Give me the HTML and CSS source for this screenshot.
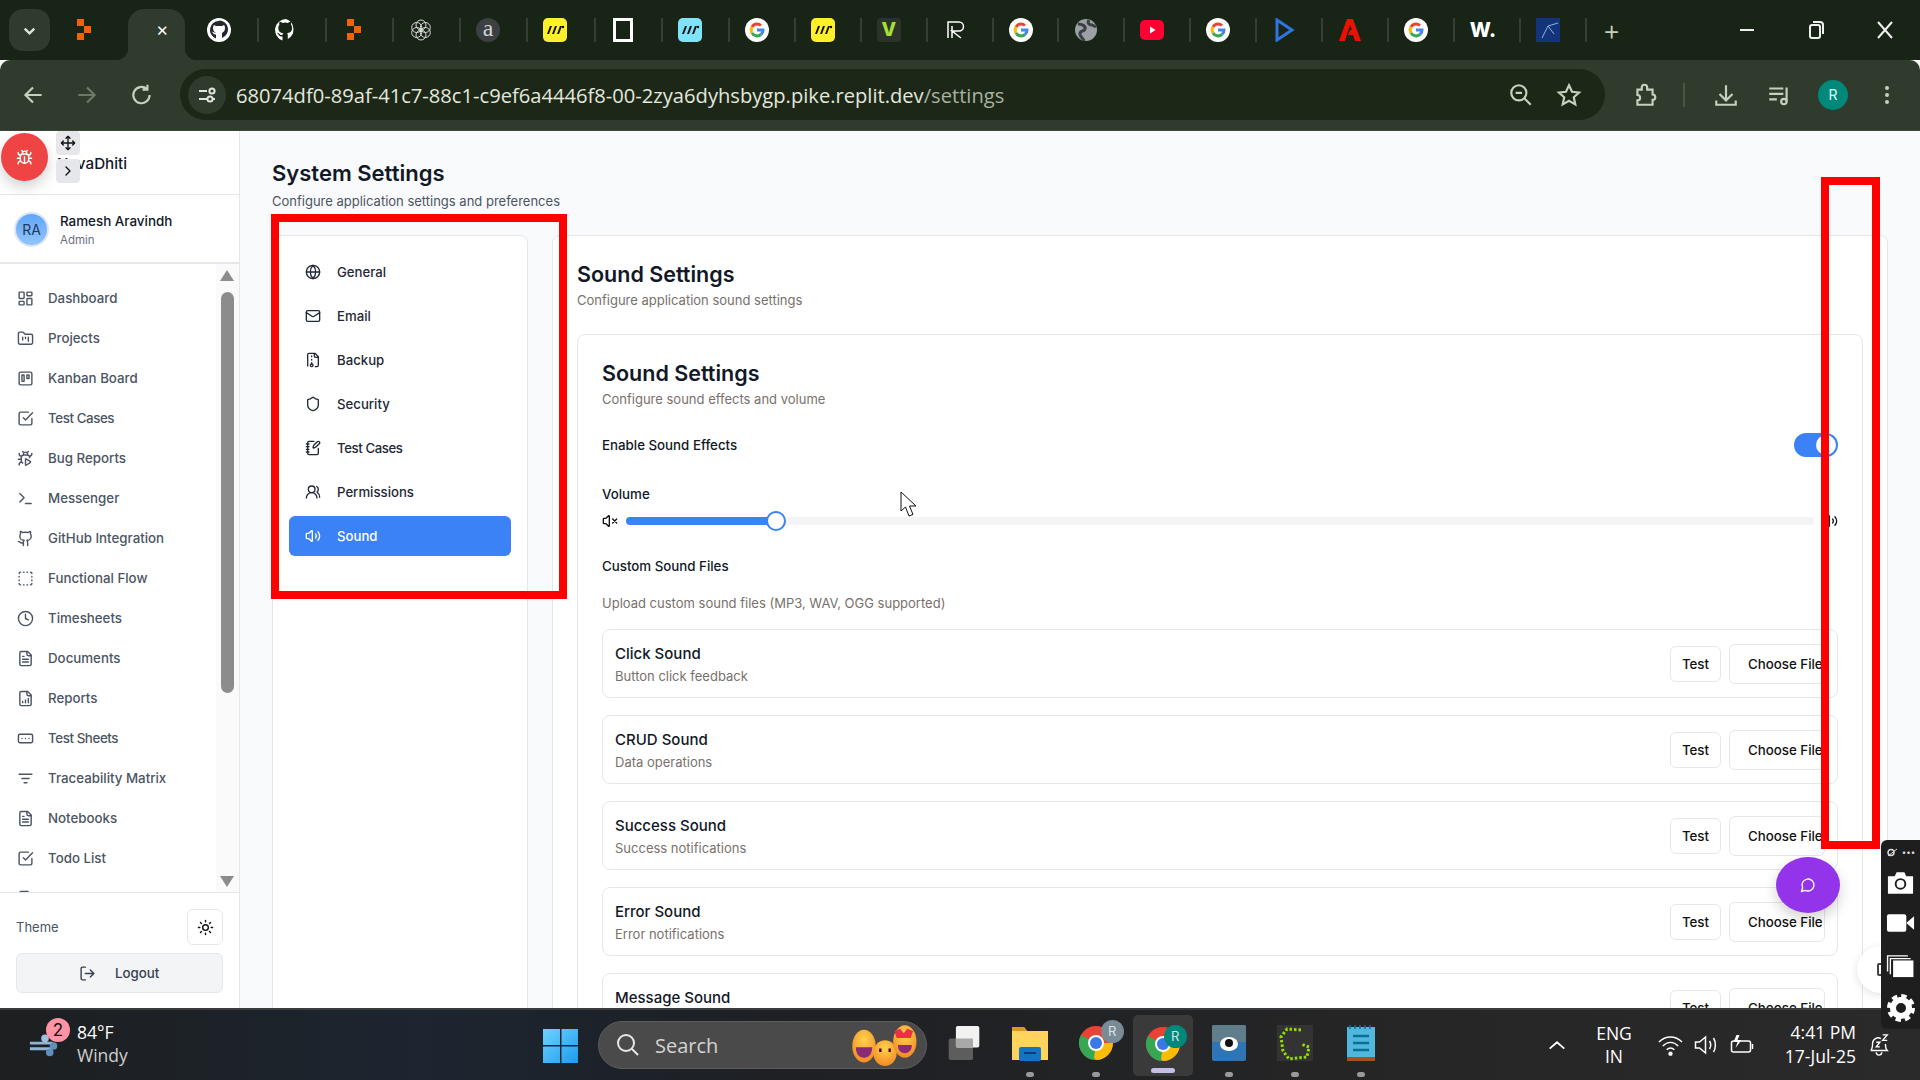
FILE: index.html
```html
<!DOCTYPE html>
<html lang="en">
<head>
    <meta charset="UTF-8">
    <title>System Settings</title>
    <link rel="stylesheet" href="styles.css">
</head>
<body>
    <!-- icon sprite -->
    <svg class="sprite" xmlns="http://www.w3.org/2000/svg">
        <symbol id="i-dashboard" viewBox="0 0 24 24"><rect x="3" y="3" width="7" height="9" rx="1"/><rect x="14" y="3" width="7" height="5" rx="1"/><rect x="14" y="12" width="7" height="9" rx="1"/><rect x="3" y="16" width="7" height="5" rx="1"/></symbol>
        <symbol id="i-projects" viewBox="0 0 24 24"><path d="M4 20h16a2 2 0 0 0 2-2V8a2 2 0 0 0-2-2h-7.93a2 2 0 0 1-1.66-.9l-.82-1.2A2 2 0 0 0 7.93 3H4a2 2 0 0 0-2 2v13c0 1.1.9 2 2 2Z"/><path d="M8 10v4M12 10v2M16 10v6"/></symbol>
        <symbol id="i-kanban" viewBox="0 0 24 24"><rect x="3" y="3" width="18" height="18" rx="2"/><rect x="7" y="7" width="3" height="9"/><rect x="14" y="7" width="3" height="5"/></symbol>
        <symbol id="i-check" viewBox="0 0 24 24"><path d="m9 11 3 3L22 4"/><path d="M21 12v7a2 2 0 0 1-2 2H5a2 2 0 0 1-2-2V5a2 2 0 0 1 2-2h11"/></symbol>
        <symbol id="i-bugplay" viewBox="0 0 24 24"><path d="M12.765 21.522a.5.5 0 0 1-.765-.424v-8.196a.5.5 0 0 1 .765-.424l5.878 3.674a1 1 0 0 1 0 1.696z"/><path d="M14.12 3.88 16 2M18 11a4 4 0 0 0-4-4h-4a4 4 0 0 0-4 4v3a6.1 6.1 0 0 0 2 4.5M20.97 5c0 2.1-1.6 3.8-3.5 4M3 21c0-2.1 1.7-3.9 3.8-4M6 13H2M6.53 9C4.6 8.8 3 7.1 3 5M8 2l1.88 1.88M9 7.13v-1a3 3 0 0 1 4.18-2.895 3 3 0 0 1 1.82 2.895v1"/></symbol>
        <symbol id="i-terminal" viewBox="0 0 24 24"><path d="M4 17l6-6-6-6M12 19h8"/></symbol>
        <symbol id="i-github" viewBox="0 0 24 24"><path d="M15 22v-4a4.8 4.8 0 0 0-1-3.5c3 0 6-2 6-5.5.08-1.25-.27-2.48-1-3.5.28-1.15.28-2.35 0-3.5 0 0-1 0-3 1.5-2.64-.5-5.36-.5-8 0C6 2 5 2 5 2c-.3 1.15-.3 2.35 0 3.5A5.403 5.403 0 0 0 4 9c0 3.5 3 5.5 6 5.5-.39.49-.68 1.05-.85 1.65-.17.6-.22 1.23-.15 1.85v4"/><path d="M9 18c-4.51 2-5-2-7-2"/></symbol>
        <symbol id="i-dashed" viewBox="0 0 24 24"><path d="M5 3a2 2 0 0 0-2 2M19 3a2 2 0 0 1 2 2M21 19a2 2 0 0 1-2 2M5 21a2 2 0 0 1-2-2M9 3h1M9 21h1M14 3h1M14 21h1M3 9v1M21 9v1M3 14v1M21 14v1"/></symbol>
        <symbol id="i-clock" viewBox="0 0 24 24"><circle cx="12" cy="12" r="10"/><path d="M12 6v6l4 2"/></symbol>
        <symbol id="i-file" viewBox="0 0 24 24"><path d="M15 2H6a2 2 0 0 0-2 2v16a2 2 0 0 0 2 2h12a2 2 0 0 0 2-2V7Z"/><path d="M14 2v4a2 2 0 0 0 2 2h4M10 9H8M16 13H8M16 17H8"/></symbol>
        <symbol id="i-report" viewBox="0 0 24 24"><path d="M15 2H6a2 2 0 0 0-2 2v16a2 2 0 0 0 2 2h12a2 2 0 0 0 2-2V7Z"/><path d="M14 2v4a2 2 0 0 0 2 2h4M8 18v-2M12 18v-4M16 18v-6"/></symbol>
        <symbol id="i-sheet" viewBox="0 0 24 24"><rect x="2" y="6" width="20" height="12" rx="2"/><path d="M12 12h.01M17 12h.01M7 12h.01"/></symbol>
        <symbol id="i-filter" viewBox="0 0 24 24"><path d="M3 6h18M7 12h10M10 18h4"/></symbol>
        <symbol id="i-globe" viewBox="0 0 24 24"><circle cx="12" cy="12" r="10"/><path d="M12 2a14.5 14.5 0 0 0 0 20 14.5 14.5 0 0 0 0-20M2 12h20"/></symbol>
        <symbol id="i-mail" viewBox="0 0 24 24"><rect x="2" y="4" width="20" height="16" rx="2"/><path d="m22 7-8.97 5.7a1.94 1.94 0 0 1-2.06 0L2 7"/></symbol>
        <symbol id="i-backup" viewBox="0 0 24 24"><path d="M10 12v-1M10 18v-2M10 7V6M14 2v4a2 2 0 0 0 2 2h4M15.5 22H18a2 2 0 0 0 2-2V7l-5-5H6a2 2 0 0 0-2 2v16a2 2 0 0 0 .274 1.01"/><circle cx="10" cy="20" r="2"/></symbol>
        <symbol id="i-shield" viewBox="0 0 24 24"><path d="M20 13c0 5-3.5 7.5-7.66 8.95a1 1 0 0 1-.67-.01C7.5 20.5 4 18 4 13V6a1 1 0 0 1 1-1c2 0 4.5-1.2 6.24-2.72a1.17 1.17 0 0 1 1.52 0C14.51 3.81 17 5 19 5a1 1 0 0 1 1 1z"/></symbol>
        <symbol id="i-notebook" viewBox="0 0 24 24"><path d="M13.4 2H6a2 2 0 0 0-2 2v16a2 2 0 0 0 2 2h12a2 2 0 0 0 2-2v-7.4M2 6h4M2 10h4M2 14h4M2 18h4"/><path d="M21.378 5.626a1 1 0 1 0-3.004-3.004l-5.01 5.012a2 2 0 0 0-.506.854l-.837 2.87a.5.5 0 0 0 .62.62l2.87-.837a2 2 0 0 0 .854-.506z"/></symbol>
        <symbol id="i-users" viewBox="0 0 24 24"><path d="M18 21a8 8 0 0 0-16 0"/><circle cx="10" cy="8" r="5"/><path d="M22 20c0-3.37-2-6.5-4-8a5 5 0 0 0-.45-8.3"/></symbol>
        <symbol id="i-volume" viewBox="0 0 24 24"><path d="M11 4.702a.705.705 0 0 0-1.203-.498L6.413 7.587A1.4 1.4 0 0 1 5.416 8H3a1 1 0 0 0-1 1v6a1 1 0 0 0 1 1h2.416a1.4 1.4 0 0 1 .997.413l3.383 3.384A.705.705 0 0 0 11 19.298z"/><path d="M16 9a5 5 0 0 1 0 6M19.364 18.364a9 9 0 0 0 0-12.728"/></symbol>
        <symbol id="i-mute" viewBox="0 0 24 24"><path d="M11 4.702a.705.705 0 0 0-1.203-.498L6.413 7.587A1.4 1.4 0 0 1 5.416 8H3a1 1 0 0 0-1 1v6a1 1 0 0 0 1 1h2.416a1.4 1.4 0 0 1 .997.413l3.383 3.384A.705.705 0 0 0 11 19.298z"/><path d="M22 9l-6 6M16 9l6 6"/></symbol>
        <symbol id="i-sun" viewBox="0 0 24 24"><circle cx="12" cy="12" r="4"/><path d="M12 2v2M12 20v2M4.93 4.93l1.41 1.41M17.66 17.66l1.41 1.41M2 12h2M20 12h2M6.34 17.66l-1.41 1.41M19.07 4.93l-1.41 1.41"/></symbol>
        <symbol id="i-logout" viewBox="0 0 24 24"><path d="M9 21H5a2 2 0 0 1-2-2V5a2 2 0 0 1 2-2h4M16 17l5-5-5-5M21 12H9"/></symbol>
        <symbol id="i-message" viewBox="0 0 24 24"><path d="M7.9 20A9 9 0 1 0 4 16.1L2 22Z"/></symbol>
        <symbol id="i-bug" viewBox="0 0 24 24"><path d="M8 2l1.88 1.88M14.12 3.88 16 2M9 7.13v-1a3.003 3.003 0 1 1 6 0v1M12 20c-3.3 0-6-2.7-6-6v-3a4 4 0 0 1 4-4h4a4 4 0 0 1 4 4v3c0 3.3-2.7 6-6 6M12 20v-9M6.53 9C4.6 8.8 3 7.1 3 5M6 13H2M3 21c0-2.1 1.7-3.9 3.8-4M20.97 5c0 2.1-1.6 3.8-3.5 4M22 13h-4M17.2 17c2.1.1 3.8 1.9 3.8 4"/></symbol>
        <symbol id="i-move" viewBox="0 0 24 24"><path d="M12 2v20M15 19l-3 3-3-3M19 9l3 3-3 3M2 12h20M5 9l-3 3 3 3M9 5l3-3 3 3"/></symbol>
        <symbol id="i-chevron" viewBox="0 0 24 24"><path d="m9 18 6-6-6-6"/></symbol>

        <symbol id="f-replit" viewBox="0 0 24 24"><path fill="#f26207" d="M5 1h7v7H5zM12 8h7v7h-7zM5 15h7v7H5z"/></symbol>
        <symbol id="f-google" viewBox="0 0 24 24"><circle cx="12" cy="12" r="12" fill="#fff"/><path d="M12 6a6 6 0 0 1 4 1.5" fill="none" stroke="#ea4335" stroke-width="3"/><path d="M7 9a6 6 0 0 1 5-3" fill="none" stroke="#ea4335" stroke-width="3"/><path d="M7 15a6 6 0 0 1 0-6" fill="none" stroke="#fbbc05" stroke-width="3"/><path d="M16 16.5A6 6 0 0 1 7 15" fill="none" stroke="#34a853" stroke-width="3"/><path d="M12 12h6a6 6 0 0 1-2 4.5" fill="none" stroke="#4285f4" stroke-width="3"/></symbol>
        <symbol id="f-stripes" viewBox="0 0 24 24"><rect x="0" y="0" width="24" height="24" rx="5" fill="currentColor"/><path d="M4 16l3-8h2l-3 8zM9 16l3-8h2l-3 8zM14 16l3-8h2l-3 8z" fill="#111"/><circle cx="20" cy="9" r="1.2" fill="#111"/></symbol>
        <symbol id="s-chrome" viewBox="0 0 36 36"><circle cx="18" cy="18" r="17" fill="#ea4335"/><path d="M18 18 3 26a17 17 0 0 0 15 9z" fill="#34a853"/><path d="M3 10 18 18 3 26a17 17 0 0 1 0-16z" fill="#34a853"/><path d="M18 18h17a17 17 0 0 1-17 17l-2-2z" fill="#fbbc05"/><circle cx="18" cy="18" r="8" fill="#fff"/><circle cx="18" cy="18" r="6" fill="#3b78e7"/></symbol>
        <linearGradient id="win-grad" x1="0" y1="0" x2="1" y2="1"><stop offset="0" stop-color="#6fd3fb"/><stop offset="1" stop-color="#1a9bf0"/></linearGradient>
        <radialGradient id="emoji-grad" cx=".5" cy=".3" r=".8"><stop offset="0" stop-color="#ffd24d"/><stop offset="1" stop-color="#f2801f"/></radialGradient>
    </svg>

    <!-- browser chrome -->
    <header class="tabstrip">
        <button class="tab-list"><svg viewBox="0 0 24 24" class="chev-down"><path d="m7 10 5 5 5-5"/></svg></button>
        <div class="tab-first"><svg class="fav"><use href="#f-replit"/></svg></div>
        <div class="tab-active"><span class="tab-close">✕</span></div>
        <div class="tabs">
            <div class="tab"><svg class="fav" viewBox="0 0 24 24"><circle cx="12" cy="12" r="12" fill="#fff"/><path d="M12 3a9 9 0 0 0-3 17.5v-4c-2 .3-3-1-4-3 2 .4 3 1.700 4 1.500-2-1-3-3-3-5s1-3 1-3l2 1h6l2-1s1 1 1 3-1 4-3 5v5a9 9 0 0 0-3-17.500z" fill="#23282c"/></svg></div>
            <div class="tab"><svg class="fav" viewBox="0 0 24 24"><path d="M12 1a11 11 0 0 0-3.500 21.400v-4c-3 .6-3.700-1.400-3.700-1.400-.5-1.300-1.200-1.600-1.200-1.600-1-.7.100-.7.100-.7 1.100.1 1.700 1.100 1.700 1.100 1 1.700 2.600 1.200 3.200.9.100-.7.400-1.200.7-1.500-2.400-.3-5-1.200-5-5.400 0-1.200.4-2.200 1.100-3-.1-.3-.5-1.400.1-2.900 0 0 .9-.3 3 1.100a10 10 0 0 1 5.400 0c2.100-1.400 3-1.100 3-1.100.6 1.500.2 2.600.1 2.900.7.800 1.100 1.800 1.100 3 0 4.200-2.600 5.100-5 5.400.4.300.7 1 .7 2v3.800A11 11 0 0 0 12 1z" fill="#fff"/></svg></div>
            <div class="tab"><svg class="fav"><use href="#f-replit"/></svg></div>
            <div class="tab"><svg class="fav icon-line openai" viewBox="0 0 24 24"><circle cx="12" cy="7" r="5"/><circle cx="12" cy="17" r="5"/><circle cx="7.700" cy="9.500" r="5"/><circle cx="16.300" cy="9.500" r="5"/><circle cx="7.700" cy="14.500" r="5"/><circle cx="16.300" cy="14.500" r="5"/></svg></div>
            <div class="tab"><span class="fav-round">a</span></div>
            <div class="tab stripe-yellow"><svg class="fav"><use href="#f-stripes"/></svg></div>
            <div class="tab"><span class="fav-square"></span></div>
            <div class="tab stripe-cyan"><svg class="fav"><use href="#f-stripes"/></svg></div>
            <div class="tab"><svg class="fav"><use href="#f-google"/></svg></div>
            <div class="tab stripe-yellow"><svg class="fav"><use href="#f-stripes"/></svg></div>
            <div class="tab"><span class="fav-v">V</span></div>
            <div class="tab"><svg class="fav icon-line" viewBox="0 0 24 24"><path d="M5 20V4h11a4 4 0 0 1 0 9H9l9 7M9 8v12"/></svg></div>
            <div class="tab"><svg class="fav"><use href="#f-google"/></svg></div>
            <div class="tab"><svg class="fav" viewBox="0 0 24 24"><circle cx="12" cy="12" r="11" fill="#9aa0a6"/><path d="M4 6c4 0 8 2 7 5s-4 1-5 4 3 5 4 8M15 2c-2 3 0 5 3 5l4 2" fill="none" stroke="#3c4043" stroke-width="3"/></svg></div>
            <div class="tab"><svg class="fav" viewBox="0 0 24 24"><rect x="0" y="2" width="24" height="20" rx="5" fill="#ff0033"/><path d="M10 8.500 15.500 12 10 15.500z" fill="#fff"/></svg></div>
            <div class="tab"><svg class="fav"><use href="#f-google"/></svg></div>
            <div class="tab"><svg class="fav" viewBox="0 0 24 24"><path d="M5 2l15 10L5 22z" fill="none" stroke="#2f74e0" stroke-width="3"/></svg></div>
            <div class="tab"><svg class="fav" viewBox="0 0 24 24"><path d="M9 1h6l8 22h-6l-2-6h-5l2-5h2L12 7 7 23H1z" fill="#eb1000"/></svg></div>
            <div class="tab"><svg class="fav"><use href="#f-google"/></svg></div>
            <div class="tab"><span class="fav-w">W.</span></div>
            <div class="tab"><svg class="fav" viewBox="0 0 24 24"><rect width="24" height="24" fill="#12347a"/><path d="M6 20 12 8l10-3M12 8l6 8" fill="none" stroke="#8fb4d8" stroke-width="1"/></svg></div>
            <div class="tab tab-new">+</div>
        </div>
        <div class="window-btns">
            <svg viewBox="0 0 24 24" class="win-btn"><path d="M5 12h14"/></svg>
            <svg viewBox="0 0 24 24" class="win-btn"><rect x="6" y="7" width="10" height="13" rx="2"/><path d="M9 4h7a3 3 0 0 1 3 3v9"/></svg>
            <svg viewBox="0 0 24 24" class="win-btn"><path d="M5 4l14 16M19 4 5 20"/></svg>
        </div>
    </header>

    <div class="toolbar">
        <svg viewBox="0 0 24 24" class="tb-icon tb-back"><path d="M20 12H5M12 5l-7 7 7 7"/></svg>
        <svg viewBox="0 0 24 24" class="tb-icon tb-forward"><path d="M4 12h15M12 5l7 7-7 7"/></svg>
        <svg viewBox="0 0 24 24" class="tb-icon tb-reload"><path d="M19 12a7.500 7.500 0 1 1-2.500-5.500M17 2.500V7h-4.500"/></svg>
        <div class="omnibox">
            <span class="site-info"><svg viewBox="0 0 24 24" class="tb-icon-sm"><path d="M4 8h8M18 16h2M4 16h8"/><circle cx="17" cy="8" r="2.600"/><circle cx="15" cy="16" r="2.600"/></svg></span>
            <span class="url">68074df0-89af-41c7-88c1-c9ef6a4446f8-00-2zya6dyhsbygp.pike.replit.dev<span class="url-path">/settings</span></span>
            <svg viewBox="0 0 24 24" class="tb-icon tb-zoom"><circle cx="10" cy="10" r="7"/><path d="M7 10h6M15 15l6 6"/></svg>
            <svg viewBox="0 0 24 24" class="tb-icon tb-star"><path d="M12 3l2.800 6 6.500.7-4.900 4.400 1.400 6.500L12 17.300 6.200 20.600l1.400-6.500L2.700 9.700 9.200 9z"/></svg>
        </div>
        <svg viewBox="0 0 24 24" class="tb-icon tb-ext"><path d="M5 7h4V5a2.500 2.500 0 0 1 5 0v2h5v4.500a2.500 2.500 0 0 1 0 5V21H5v-4a2.500 2.500 0 0 0 0-5z"/></svg>
        <span class="tb-sep"></span>
        <svg viewBox="0 0 24 24" class="tb-icon tb-download"><path d="M12 3v13M6 11l6 6 6-6M3 17v4h18v-4"/></svg>
        <svg viewBox="0 0 24 24" class="tb-icon tb-media"><path d="M3 6h13M3 11h13M3 16h7M19 5v13"/><circle cx="16.500" cy="18" r="2.500"/></svg>
        <span class="tb-avatar">R</span>
        <svg viewBox="0 0 24 24" class="tb-kebab"><circle cx="12" cy="5" r="2"/><circle cx="12" cy="12" r="2"/><circle cx="12" cy="19" r="2"/></svg>
    </div>

    <!-- the app -->
    <div class="app">
        <aside class="sidebar">
            <div class="brand">NavaDhiti</div>
            <div class="user">
                <span class="user-avatar">RA</span>
                <div>
                    <div class="user-name">Ramesh Aravindh</div>
                    <div class="user-role">Admin</div>
                </div>
            </div>
            <nav class="side-nav">
                <a class="side-link"><svg class="ico"><use href="#i-dashboard"/></svg>Dashboard</a>
                <a class="side-link"><svg class="ico"><use href="#i-projects"/></svg>Projects</a>
                <a class="side-link"><svg class="ico"><use href="#i-kanban"/></svg>Kanban Board</a>
                <a class="side-link tight"><svg class="ico"><use href="#i-check"/></svg>Test Cases</a>
                <a class="side-link"><svg class="ico"><use href="#i-bugplay"/></svg>Bug Reports</a>
                <a class="side-link"><svg class="ico"><use href="#i-terminal"/></svg>Messenger</a>
                <a class="side-link"><svg class="ico"><use href="#i-github"/></svg>GitHub Integration</a>
                <a class="side-link"><svg class="ico"><use href="#i-dashed"/></svg>Functional Flow</a>
                <a class="side-link"><svg class="ico"><use href="#i-clock"/></svg>Timesheets</a>
                <a class="side-link"><svg class="ico"><use href="#i-file"/></svg>Documents</a>
                <a class="side-link"><svg class="ico"><use href="#i-report"/></svg>Reports</a>
                <a class="side-link tight"><svg class="ico"><use href="#i-sheet"/></svg>Test Sheets</a>
                <a class="side-link"><svg class="ico"><use href="#i-filter"/></svg>Traceability Matrix</a>
                <a class="side-link"><svg class="ico"><use href="#i-file"/></svg>Notebooks</a>
                <a class="side-link"><svg class="ico"><use href="#i-check"/></svg>Todo List</a>
                <a class="side-link"><svg class="ico"><use href="#i-file"/></svg></a>
                <div class="scrollbar">
                    <span class="arrow-up"></span>
                    <span class="scroll-thumb"></span>
                    <span class="arrow-down"></span>
                </div>
            </nav>
            <div class="side-foot">
                <div class="theme-row">
                    <span>Theme</span>
                    <button class="theme-btn"><svg class="ico ico-dark"><use href="#i-sun"/></svg></button>
                </div>
                <button class="logout"><svg class="ico"><use href="#i-logout"/></svg>Logout</button>
            </div>
        </aside>

        <main class="main">
            <h1 class="page-title">System Settings</h1>
            <p class="page-sub">Configure application settings and preferences</p>
            <div class="settings">
                <div class="settings-nav">
                    <a class="set-link"><svg class="ico"><use href="#i-globe"/></svg>General</a>
                    <a class="set-link"><svg class="ico"><use href="#i-mail"/></svg>Email</a>
                    <a class="set-link"><svg class="ico"><use href="#i-backup"/></svg>Backup</a>
                    <a class="set-link"><svg class="ico"><use href="#i-shield"/></svg>Security</a>
                    <a class="set-link tight"><svg class="ico"><use href="#i-notebook"/></svg>Test Cases</a>
                    <a class="set-link"><svg class="ico"><use href="#i-users"/></svg>Permissions</a>
                    <a class="set-link active"><svg class="ico"><use href="#i-volume"/></svg>Sound</a>
                </div>
                <section class="panel">
                    <h2 class="panel-title">Sound Settings</h2>
                    <p class="panel-sub">Configure application sound settings</p>
                    <div class="card">
                        <h3 class="card-title">Sound Settings</h3>
                        <p class="card-sub">Configure sound effects and volume</p>
                        <div class="enable-row">
                            <span class="label">Enable Sound Effects</span>
                            <span class="toggle"><span class="toggle-thumb"></span></span>
                        </div>
                        <div class="label volume-label">Volume</div>
                        <div class="slider">
                            <svg class="ico ico-dark"><use href="#i-mute"/></svg>
                            <div class="track">
                                <div class="track-fill" style="width: 12.6%"></div>
                                <span class="track-thumb"></span>
                            </div>
                            <svg class="ico ico-dark"><use href="#i-volume"/></svg>
                        </div>
                        <div class="label files-label">Custom Sound Files</div>
                        <p class="files-hint">Upload custom sound files (MP3, WAV, OGG supported)</p>
                        <div class="sound-row">
                            <div><div class="sound-name">Click Sound</div><div class="sound-desc">Button click feedback</div></div>
                            <button class="btn-test">Test</button><button class="btn-file">Choose File</button>
                        </div>
                        <div class="sound-row">
                            <div><div class="sound-name">CRUD Sound</div><div class="sound-desc">Data operations</div></div>
                            <button class="btn-test">Test</button><button class="btn-file">Choose File</button>
                        </div>
                        <div class="sound-row">
                            <div><div class="sound-name">Success Sound</div><div class="sound-desc">Success notifications</div></div>
                            <button class="btn-test">Test</button><button class="btn-file">Choose File</button>
                        </div>
                        <div class="sound-row">
                            <div><div class="sound-name">Error Sound</div><div class="sound-desc">Error notifications</div></div>
                            <button class="btn-test">Test</button><button class="btn-file">Choose File</button>
                        </div>
                        <div class="sound-row">
                            <div><div class="sound-name">Message Sound</div><div class="sound-desc"></div></div>
                            <button class="btn-test">Test</button><button class="btn-file">Choose File</button>
                        </div>
                    </div>
                </section>
            </div>
        </main>

        <!-- things floating over the page -->
        <div class="debug-fab"><svg class="ico"><use href="#i-bug"/></svg></div>
        <div class="mini-btn mini-move"><svg class="ico"><use href="#i-move"/></svg></div>
        <div class="mini-btn mini-next"><svg class="ico"><use href="#i-chevron"/></svg></div>
        <div class="mark mark-nav"></div>
        <div class="mark mark-side"></div>
        <svg class="cursor" viewBox="0 0 18 27"><path d="M1 1v19l4.500-4 3.500 9 4-1.500-3.500-8.500H16z" fill="#fff" stroke="#111" stroke-width="1"/></svg>
        <div class="chat-fab"><svg class="ico"><use href="#i-message"/></svg></div>
        <div class="peek-circle"><span class="peek-icon"></span></div>
    </div>

    <div class="capture-bar">
        <svg viewBox="0 0 24 24" class="cap-top"><circle cx="8" cy="13" r="6" fill="none" stroke="#ddd" stroke-width="3"/><path d="M2 20 20 6" stroke="#ddd" stroke-width="2"/></svg><span class="cap-dots">•••</span>
        <svg viewBox="0 0 30 24" class="cap-icon cap-camera"><path d="M2 5h7l2-4h8l2 4h7v18H2z" fill="#fff"/><circle cx="15" cy="13" r="5" fill="none" stroke="#1e1e1e" stroke-width="2"/></svg>
        <svg viewBox="0 0 30 24" class="cap-icon"><rect x="1" y="3" width="20" height="18" rx="2" fill="#fff"/><path d="M21 12l8-7v14z" fill="#fff"/></svg>
        <svg viewBox="0 0 30 26" class="cap-icon cap-copies"><path d="M1 19V2h22" fill="none" stroke="#fff" stroke-width="1.500"/><path d="M4 22V5h22" fill="none" stroke="#fff" stroke-width="1.500"/><rect x="7" y="7" width="22" height="18" fill="#fff"/></svg>
        <svg viewBox="0 0 30 30" class="cap-gear"><circle cx="15" cy="15" r="8" fill="none" stroke="#fff" stroke-width="6"/><circle cx="15" cy="15" r="12" fill="none" stroke="#fff" stroke-width="4" stroke-dasharray="5.400 4"/></svg>
    </div>

    <!-- windows taskbar -->
    <footer class="taskbar">
        <div class="weather">
            <svg viewBox="0 0 36 26" class="weather-icon"><path d="M2 11h24M2 17h24" stroke="#90b4d8" stroke-width="3"/><circle cx="18" cy="6" r="4" fill="#9fc0df"/><circle cx="27" cy="14" r="4" fill="#5f8fbc"/><circle cx="23" cy="21" r="4" fill="#5f8fbc"/></svg>
            <span class="weather-badge">2</span>
            <div class="weather-text"><div>84°F</div><div class="weather-sub">Windy</div></div>
        </div>
        <svg viewBox="0 0 35 35" class="win-logo"><path fill="url(#win-grad)" d="M0 1h17v16H0zM18.500 1H35v16H18.500zM0 18.500h17V35H0zM18.500 18.500H35V35H18.500z"/></svg>
        <div class="search">
            <svg viewBox="0 0 24 24" class="search-icon"><circle cx="10" cy="10" r="8"/><path d="M16 16l6 6"/></svg>
            <span class="search-text">Search</span>
            <svg viewBox="0 0 56 36" class="search-emoji">
                <ellipse cx="10" cy="19" rx="10" ry="14" fill="url(#emoji-grad)"/><path d="M3 20h14c0 6-3 9-7 9s-7-3-7-9z" fill="#8a2b76"/>
                <ellipse cx="28" cy="25" rx="10" ry="11" fill="url(#emoji-grad)"/><path d="M24 21v3M32 21v3" stroke="#402" stroke-width="2"/>
                <ellipse cx="45" cy="15" rx="10" ry="14" fill="url(#emoji-grad)"/><path d="M36 6l5-2 3 4 3-4 5 2-2 6h-12z" fill="#e8304a"/><path d="M39 18h12c0 5-3 7-6 7s-6-2-6-7z" fill="#8a2b76"/>
            </svg>
        </div>
        <div class="task-items">
            <div class="task"><svg viewBox="0 0 36 40" class="task-icon"><rect x="1" y="15" width="27" height="24" rx="2" fill="#5d5d5d"/><rect x="9" y="1" width="26" height="24" rx="2" fill="#f2f2f2"/><rect x="9" y="15" width="19" height="10" fill="#a8a8a8"/></svg></div>
            <div class="task open"><svg viewBox="0 0 36 36" class="task-icon"><path d="M0 2h12l3 4h21v29H0z" fill="#ffd45e"/><path d="M0 2h12l3 4H0z" fill="#d9981e"/><rect x="7" y="22" width="22" height="14" rx="2" fill="#1573c4"/><rect x="12" y="27" width="12" height="2" fill="#0a3e78"/></svg></div>
            <div class="task open"><svg class="task-icon"><use href="#s-chrome"/></svg><span class="task-badge slate">R</span></div>
            <div class="task active"><svg class="task-icon"><use href="#s-chrome"/></svg><span class="task-badge teal">R</span></div>
            <div class="task open"><svg viewBox="0 0 34 36" class="task-icon"><rect width="34" height="36" rx="2" fill="#2f74b5"/><path d="M0 2a2 2 0 0 1 2-2h30a2 2 0 0 1 2 2v15H0z" fill="#607d8b"/><ellipse cx="17" cy="19" rx="9" ry="7" fill="#fff"/><circle cx="17" cy="18" r="4" fill="#111"/></svg></div>
            <div class="task open"><svg viewBox="0 0 36 36" class="task-icon"><rect width="36" height="36" fill="#333"/><path d="M24 5 10 4 4 12l2 14 6 8 18-2 2-10-8-3" fill="none" stroke="#8fe000" stroke-width="3" stroke-dasharray="2.500 2"/></svg></div>
            <div class="task open"><svg viewBox="0 0 28 36" class="task-icon"><rect y="2" width="28" height="32" fill="#4fb8dc"/><rect y="32" width="28" height="4" fill="#a5521f"/><path d="M6 11h16M6 18h16M6 25h16" stroke="#0d6d96" stroke-width="2.500"/><path d="M3 0v4M8 0v4M13 0v4M18 0v4M23 0v4" stroke="#0d6d96" stroke-width="1.500"/></svg></div>
        </div>
        <div class="tray">
            <svg viewBox="0 0 24 24" class="tray-chev"><path d="M4 16l8-7 8 7"/></svg>
            <div class="tray-lang"><div>ENG</div><div>IN</div></div>
            <svg viewBox="0 0 28 24" class="tray-icon tray-wifi"><path d="M2 9c7-7 17-7 24 0M6 13c5-5 11-5 16 0M10 17c2.500-2.500 5.500-2.500 8 0"/><circle cx="14" cy="21" r="1.500" fill="#fff"/></svg>
            <svg viewBox="0 0 26 24" class="tray-icon"><path d="M2 9h4l6-5v16l-6-5H2zM16 8c1.500 2.500 1.500 5.500 0 8M20 5c2.500 4 2.500 10 0 14"/></svg>
            <svg viewBox="0 0 26 24" class="tray-icon"><rect x="2" y="8" width="19" height="11" rx="2"/><path d="M23 11v5"/><path d="M7 2l-3 7h4l-2 6 6-8H8l2-5z" fill="#fff" stroke="none"/></svg>
            <div class="tray-time"><div>4:41 PM</div><div>17-Jul-25</div></div>
            <svg viewBox="0 0 24 26" class="tray-bell"><path d="M3 19c2-2 2-4 2-8a6 6 0 0 1 9-5M19 12c0 3 0 5 2 7H3M9 21a3 3 0 0 0 6 0"/><path d="M9 10h4l-4 5h4M16 2h5l-5 6h5"/></svg>
        </div>
    </footer>
</body>
</html>
```

FILE: styles.css
```css
* {
    box-sizing: border-box;
}

html, body {
    margin: 0;
    height: 100%;
}

body {
    width: 1920px;
    height: 1080px;
    position: relative;
    overflow: hidden;
    display: flex;
    flex-direction: column;
    font-family: "Inter", "Liberation Sans", sans-serif;
    background-color: #fff;
    color: #111827;
}

h1, h2, h3, p {
    margin: 0;
}

button {
    font-family: inherit;
}

.sprite {
    position: absolute;
    width: 0;
    height: 0;
}

/* shared stroke icon */
.ico {
    width: 17px;
    height: 17px;
    flex: none;
    fill: none;
    stroke: currentColor;
    stroke-width: 2;
    stroke-linecap: round;
    stroke-linejoin: round;
}

.ico-dark {
    color: #111;
}

/* tabs */
.tabstrip {
    height: 60px;
    flex: none;
    display: flex;
    align-items: flex-end;
    background-color: #182415;
    padding-left: 9px;
    color: #fff;
}

.tab-list {
    width: 41px;
    height: 42px;
    margin-bottom: 9px;
    border: none;
    border-radius: 14px;
    background-color: #2f3b2d;
    padding: 9px;
}

.chev-down {
    fill: none;
    stroke: #dfe5d8;
    stroke-width: 2.500;
    display: block;
}

.tab-first {
    width: 68px;
    height: 60px;
    display: flex;
    align-items: center;
    justify-content: center;
    margin-right: 10px;
}

.tab-active {
    width: 57px;
    height: 51px;
    border-radius: 16px 16px 0 0;
    background-color: #2f3b2d;
    display: flex;
    align-items: center;
    justify-content: center;
    padding: 0 0 9px 12px;
    position: relative;
}

.tab-active::before, .tab-active::after {
    content: "";
    position: absolute;
    bottom: 0;
    width: 12px;
    height: 12px;
}

.tab-active::before {
    left: -12px;
    background: radial-gradient(circle at 0 0, #182415 12px, #2f3b2d 12.500px);
}

.tab-active::after {
    right: -12px;
    background: radial-gradient(circle at 100% 0, #182415 12px, #2f3b2d 12.500px);
}

.tab-close {
    font-size: 15px;
    color: #fff;
}

.tabs {
    display: flex;
    margin-left: 7px;
    height: 60px;
    align-items: center;
}

.tab {
    width: 65.900px;
    flex: none;
    height: 24px;
    padding-left: 15px;
    display: flex;
    align-items: center;
    border-right: 2px solid #333f30;
}

.tab:nth-child(-n+8) {
    width: 67.250px;
}

.tab-new {
    border-right: none;
    font-size: 28px;
    font-weight: 300;
    color: #c5d0bd;
    padding-left: 16px;
}

.fav {
    width: 24px;
    height: 24px;
    display: block;
}

.stripe-yellow {
    color: #fff02a;
}

.stripe-cyan {
    color: #7fe3fb;
}

.icon-line {
    fill: none;
    stroke: #fff;
    stroke-width: 1.500;
}

.openai {
    stroke: #d8d8d8;
    stroke-width: 1;
}

.fav-round {
    width: 24px;
    height: 24px;
    border-radius: 50%;
    background-color: #3c4043;
    color: #d4d4d4;
    font: 24px/21px "Liberation Serif", serif;
    text-align: center;
}

.fav-square {
    width: 20px;
    height: 24px;
    margin-left: 2px;
    border: 3px solid #fff;
}

.fav-v {
    width: 24px;
    height: 24px;
    border-radius: 4px;
    background-color: #2c332b;
    color: #a6e22e;
    font: 800 19px/24px "Inter", sans-serif;
    text-align: center;
}

.fav-w {
    width: 24px;
    color: #fff;
    font: 800 20px/24px "Inter", sans-serif;
    white-space: nowrap;
}

.window-btns {
    position: absolute;
    top: 18px;
    left: 1735px;
    display: flex;
    gap: 45px;
}

.win-btn {
    width: 24px;
    height: 24px;
    fill: none;
    stroke: #f0f0f0;
    stroke-width: 2;
}

/* url bar */
.toolbar {
    height: 71px;
    flex: none;
    display: flex;
    align-items: center;
    background-color: #2f3b2d;
    border-radius: 10px 10px 0 0;
    border-bottom: 1px solid #3c4739;
    padding-bottom: 1px;
}

.tb-icon {
    width: 26px;
    height: 26px;
    flex: none;
    fill: none;
    stroke: #c5d0bd;
    stroke-width: 2;
}

.tb-back {
    margin-left: 20px;
}

.tb-forward {
    margin-left: 28px;
    stroke: #6e7a69;
}

.tb-reload {
    margin-left: 29px;
}

.omnibox {
    width: 1425px;
    height: 51px;
    margin-left: 25px;
    border-radius: 26px;
    background-color: #1c2717;
    display: flex;
    align-items: center;
}

.site-info {
    width: 38px;
    height: 38px;
    margin-left: 8px;
    border-radius: 50%;
    background-color: #2f3b2d;
    display: flex;
    align-items: center;
    justify-content: center;
}

.tb-icon-sm {
    width: 24px;
    height: 24px;
    fill: none;
    stroke: #dfe5d8;
    stroke-width: 2;
}

.url {
    margin-left: 10px;
    font-family: "Open Sans", sans-serif;
    font-size: 20.150px;
    color: #e3e8dd;
    white-space: nowrap;
}

.url-path {
    color: #a8b3a0;
}

.tb-zoom {
    margin-left: auto;
}

.tb-star {
    margin-left: 22px;
    margin-right: 23px;
}

.tb-ext {
    margin-left: 27px;
}

.tb-sep {
    width: 2px;
    height: 24px;
    margin-left: 25px;
    background-color: #4a5546;
}

.tb-download {
    margin-left: 28px;
}

.tb-media {
    margin-left: 27px;
}

.tb-avatar {
    width: 30px;
    height: 30px;
    margin-left: 26px;
    border-radius: 50%;
    background-color: #00897b;
    color: #dff;
    font-size: 14px;
    line-height: 30px;
    text-align: center;
}

.tb-kebab {
    width: 24px;
    height: 24px;
    margin-left: 27px;
    fill: #c5d0bd;
}

/* app shell */
.app {
    flex: 1;
    min-height: 0;
    display: flex;
    position: relative;
}

.sidebar {
    width: 240px;
    flex: none;
    display: flex;
    flex-direction: column;
    background-color: #fff;
    border-right: 1px solid #e5e7eb;
}

.brand {
    height: 64px;
    flex: none;
    padding: 22px 0 0 57px;
    font-size: 15.200px;
    line-height: 22px;
    font-weight: 500;
    border-bottom: 1px solid #e5e7eb;
}

.user {
    height: 69px;
    flex: none;
    display: flex;
    align-items: center;
    gap: 11px;
    padding: 2px 0 0 14px;
    border-bottom: 2px solid #e5e7eb;
}

.user-avatar {
    width: 35px;
    height: 35px;
    border-radius: 50%;
    border: 2px solid #dbe5f3;
    background: linear-gradient(#60a5fa, #93c5fd);
    color: #1e3a5f;
    font-size: 14px;
    line-height: 31px;
    text-align: center;
}

.user-name {
    font-size: 13.400px;
    line-height: 18px;
    font-weight: 500;
}

.user-role {
    margin-top: 3px;
    font-size: 11.500px;
    line-height: 14px;
    color: #6b7280;
}

.side-nav {
    flex: 1;
    min-height: 0;
    overflow: hidden;
    position: relative;
    padding-top: 14px;
    border-bottom: 1px solid #e5e7eb;
}

.side-link {
    height: 40px;
    display: flex;
    align-items: center;
    gap: 14px;
    padding-left: 17px;
    font-size: 13.300px;
    font-weight: 500;
    color: #4b5563;
}

.tight {
    letter-spacing: -0.400px;
}

.scrollbar {
    position: absolute;
    top: 0;
    bottom: 0;
    right: 0;
    width: 23px;
    background-color: #fafafa;
}

.arrow-up, .arrow-down {
    position: absolute;
    left: 4px;
    width: 0;
    height: 0;
    border-left: 7px solid transparent;
    border-right: 7px solid transparent;
}

.arrow-up {
    top: 6px;
    border-bottom: 11px solid #8c8c8c;
}

.arrow-down {
    bottom: 5px;
    border-top: 11px solid #8c8c8c;
}

.scroll-thumb {
    position: absolute;
    top: 28px;
    left: 5px;
    width: 13px;
    height: 401px;
    border-radius: 7px;
    background-color: #8c8c8c;
}

.side-foot {
    height: 115px;
    flex: none;
    padding: 16px 16px 0;
}

.theme-row {
    display: flex;
    align-items: center;
    justify-content: space-between;
    font-size: 13px;
    color: #4b5563;
}

.theme-btn {
    width: 36px;
    height: 36px;
    padding: 0;
    display: flex;
    align-items: center;
    justify-content: center;
    background-color: #fff;
    border: 1px solid #e5e7eb;
    border-radius: 6px;
}

.logout {
    width: 207px;
    height: 40px;
    margin-top: 8px;
    display: flex;
    align-items: center;
    gap: 19px;
    padding-left: 62px;
    background-color: #f3f4f6;
    border: 1px solid #e5e7eb;
    border-radius: 6px;
    color: #374151;
    font-size: 13.300px;
    font-weight: 500;
}

/* main area */
.main {
    flex: 1;
    min-width: 0;
    overflow: hidden;
    background-color: #f9fafb;
    padding: 27px 32px 0 32px;
}

.page-title {
    font-size: 22px;
    line-height: 30px;
    font-weight: 600;
}

.page-sub {
    margin-top: 4px;
    font-size: 13px;
    line-height: 18px;
    color: #4b5563;
}

.settings {
    display: flex;
    gap: 24px;
    margin-top: 25px;
    height: 900px;
}

.settings-nav {
    width: 256px;
    flex: none;
    display: flex;
    flex-direction: column;
    gap: 4px;
    padding: 16px;
    background-color: #fff;
    border: 1px solid #e5e7eb;
    border-radius: 8px;
}

.set-link {
    height: 40px;
    flex: none;
    display: flex;
    align-items: center;
    gap: 16px;
    padding-left: 16px;
    border-radius: 6px;
    font-size: 13.200px;
    font-weight: 500;
    color: #1f2937;
}

.set-link .ico {
    width: 16px;
    height: 16px;
}

.set-link.active {
    background-color: #3b82f6;
    color: #fff;
}

.panel {
    flex: 1;
    min-width: 0;
    padding: 24px;
    background-color: #fff;
    border: 1px solid #e5e7eb;
    border-radius: 8px;
}

.panel-title, .card-title {
    font-size: 21.500px;
    line-height: 28px;
    font-weight: 600;
}

.panel-sub, .card-sub {
    margin-top: 3px;
    font-size: 13px;
    line-height: 18px;
    color: #78716c;
}

.card {
    margin-top: 25px;
    padding: 24px 24px 0;
    border: 1px solid #e5e7eb;
    border-radius: 8px;
}

.label {
    font-size: 13.300px;
    line-height: 18px;
    font-weight: 500;
}

.enable-row {
    display: flex;
    align-items: center;
    justify-content: space-between;
    margin-top: 25px;
}

.toggle {
    width: 44px;
    height: 24px;
    display: flex;
    justify-content: flex-end;
    align-items: center;
    border-radius: 12px;
    background-color: #3b82f6;
    padding: 2px;
}

.toggle-thumb {
    width: 20px;
    height: 20px;
    border-radius: 50%;
    background-color: #fff;
}

.volume-label {
    margin-top: 28px;
}

.slider {
    display: flex;
    align-items: center;
    gap: 8px;
    margin-top: 10px;
}

.slider .ico {
    width: 16px;
    height: 16px;
}

.track {
    flex: 1;
    height: 8px;
    position: relative;
    border-radius: 4px;
    background-color: #f4f4f5;
}

.track-fill {
    height: 100%;
    border-radius: 4px;
    background-color: #3b82f6;
}

.track-thumb {
    position: absolute;
    top: -6px;
    left: calc(12.6% - 10px);
    width: 20px;
    height: 20px;
    border-radius: 50%;
    background-color: #fff;
    border: 2px solid #3b82f6;
}

.files-label {
    margin-top: 28px;
}

.files-hint {
    margin-top: 19px;
    font-size: 13px;
    line-height: 18px;
    color: #78716c;
}

.sound-row {
    height: 69px;
    display: flex;
    align-items: center;
    margin-top: 17px;
    padding: 0 12px;
    border: 1px solid #e5e7eb;
    border-radius: 8px;
}

.sound-row > div {
    flex: 1;
    padding-top: 2px;
}

.sound-name {
    font-size: 15px;
    line-height: 20px;
    font-weight: 500;
}

.sound-desc {
    min-height: 18px;
    margin-top: 3px;
    font-size: 13px;
    line-height: 18px;
    color: #78716c;
}

.btn-test, .btn-file {
    padding: 0;
    background-color: #fff;
    border: 1px solid #e5e7eb;
    border-radius: 6px;
    color: #111;
    font-size: 13.300px;
    font-weight: 500;
    white-space: nowrap;
}

.btn-test {
    width: 51px;
    height: 36px;
    margin-right: 8px;
}

.btn-file {
    width: 96px;
    height: 40px;
    text-align: left;
    padding-left: 18px;
}

/* floating bits */
.debug-fab {
    position: absolute;
    left: 1px;
    top: 2px;
    width: 47px;
    height: 48px;
    border-radius: 50%;
    background-color: #ef4444;
    color: #fff;
    display: flex;
    align-items: center;
    justify-content: center;
    box-shadow: 0 6px 14px rgba(0, 0, 0, 0.18);
}

.mini-btn {
    position: absolute;
    left: 56px;
    width: 24px;
    height: 24px;
    border-radius: 4px;
    background-color: #e5e7eb;
    color: #111;
    display: flex;
    align-items: center;
    justify-content: center;
}

.mini-move {
    top: 0;
}

.mini-next {
    top: 28px;
}

.mini-btn .ico {
    width: 16px;
    height: 16px;
}

.mark {
    position: absolute;
    border: 8px solid #f00;
}

.mark-nav {
    left: 271px;
    top: 83px;
    width: 296px;
    height: 385px;
}

.mark-side {
    left: 1821px;
    top: 46px;
    width: 59px;
    height: 672px;
}

.cursor {
    position: absolute;
    left: 900px;
    top: 360px;
    width: 18px;
    height: 27px;
}

.chat-fab {
    position: absolute;
    left: 1776px;
    top: 726px;
    width: 64px;
    height: 56px;
    border-radius: 50%;
    background-color: #9333ea;
    color: #fff;
    display: flex;
    align-items: center;
    justify-content: center;
    box-shadow: 0 6px 14px rgba(0, 0, 0, 0.18);
}

.chat-fab .ico {
    width: 16px;
    height: 16px;
}

.peek-circle {
    position: absolute;
    left: 1857px;
    top: 815px;
    width: 47px;
    height: 47px;
    border-radius: 50%;
    background-color: #fff;
    box-shadow: 0 2px 8px rgba(0, 0, 0, 0.12);
}

.peek-icon {
    position: absolute;
    left: 20px;
    top: 17px;
    width: 14px;
    height: 13px;
    border: 2px solid #444;
    border-radius: 2px;
}

.capture-bar {
    position: absolute;
    left: 1881px;
    top: 840px;
    width: 39px;
    height: 189px;
    padding-top: 6px;
    background-color: #1e1e1e;
    border-radius: 6px 0 0 6px;
    z-index: 2;
    display: flex;
    flex-wrap: wrap;
    justify-content: center;
}

.cap-top {
    width: 14px;
    height: 12px;
}

.cap-dots {
    font-size: 8px;
    line-height: 12px;
    color: #ddd;
    margin-left: 2px;
}

.cap-icon {
    width: 29px;
    height: 24px;
    margin-top: 10px;
    display: block;
}

.cap-camera {
    margin-top: 7px;
}

.cap-copies {
    margin-top: 12px;
}

.cap-gear {
    width: 30px;
    height: 30px;
    margin-top: 9px;
}

/* taskbar */
.taskbar {
    height: 72px;
    flex: none;
    display: flex;
    align-items: center;
    position: relative;
    background: linear-gradient(90deg, #1d1f20 0, #1c2530 22%, #1e2024 40%, #262626 75%, #2a2a2a 100%);
    border-top: 2px solid #3a3b3c;
    color: #fff;
}

.weather {
    width: 543px;
    flex: none;
    height: 100%;
    display: flex;
    align-items: center;
    padding-left: 28px;
    position: relative;
}

.weather-icon {
    width: 34px;
    height: 26px;
}

.weather-badge {
    position: absolute;
    left: 46px;
    top: 8px;
    width: 24px;
    height: 24px;
    border-radius: 50%;
    background-color: #ff94a4;
    color: #111;
    font-size: 17px;
    line-height: 24px;
    text-align: center;
}

.weather-text {
    margin-left: 15px;
    margin-top: -3px;
    font-family: "Open Sans", sans-serif;
    font-size: 17.500px;
    line-height: 23px;
}

.weather-sub {
    color: #cfcfcf;
}

.win-logo {
    width: 35px;
    height: 35px;
    flex: none;
}

.search {
    width: 329px;
    height: 48px;
    margin-left: 20px;
    flex: none;
    display: flex;
    align-items: center;
    padding-left: 17px;
    border-radius: 24px;
    background-color: #4a4a4a;
    border: 1px solid #5c5c5c;
}

.search-icon {
    width: 24px;
    height: 24px;
    fill: none;
    stroke: #e8e8e8;
    stroke-width: 2;
}

.search-text {
    margin-left: 15px;
    font-family: "Open Sans", sans-serif;
    font-size: 20px;
    color: #d4d4d4;
}

.search-emoji {
    width: 70px;
    height: 42px;
    margin-left: auto;
    margin-right: 6px;
}

.task-items {
    display: flex;
    margin-left: 4px;
    height: 100%;
}

.task {
    width: 66.200px;
    flex: none;
    display: flex;
    align-items: center;
    justify-content: center;
    position: relative;
    padding-bottom: 4px;
}

.task-icon {
    width: 36px;
    height: 36px;
}

.task.open::after, .task.active::after {
    content: "";
    position: absolute;
    left: 50%;
    bottom: 3px;
    width: 8px;
    height: 5px;
    margin-left: -4px;
    border-radius: 3px;
    background-color: #9a9a9a;
}

.task.active {
    margin: 5px 3px 4px;
    width: 60px;
    border-radius: 5px;
    background-color: #3a3a3a;
}

.task.active::after {
    width: 24px;
    margin-left: -12px;
    background-color: #c4bfe6;
}

.task-badge {
    position: absolute;
    top: 10px;
    right: 6px;
    width: 23px;
    height: 23px;
    border-radius: 50%;
    font-size: 13px;
    line-height: 23px;
    text-align: center;
    color: #d9e4e4;
}

.task-badge.slate {
    background-color: #7a8a96;
}

.task-badge.teal {
    background-color: #00897b;
}

.tray {
    position: absolute;
    left: 1546px;
    right: 0;
    top: 0;
    bottom: 0;
    display: flex;
    align-items: center;
    font-family: "Open Sans", sans-serif;
    font-size: 17.500px;
    line-height: 23px;
}

.tray-chev {
    width: 22px;
    height: 22px;
    fill: none;
    stroke: #fff;
    stroke-width: 2;
}

.tray-lang {
    width: 50px;
    margin-left: 21px;
    text-align: center;
}

.tray-icon {
    width: 27px;
    height: 24px;
    margin-left: 9px;
    fill: none;
    stroke: #fff;
    stroke-width: 1.500;
}

.tray-wifi {
    margin-left: 18px;
}

.tray-time {
    width: 100px;
    margin-top: -3px;
    line-height: 24px;
    text-align: right;
}

.tray-bell {
    width: 22px;
    height: 24px;
    margin-left: 12px;
    fill: none;
    stroke: #fff;
    stroke-width: 1.500;
}
```
